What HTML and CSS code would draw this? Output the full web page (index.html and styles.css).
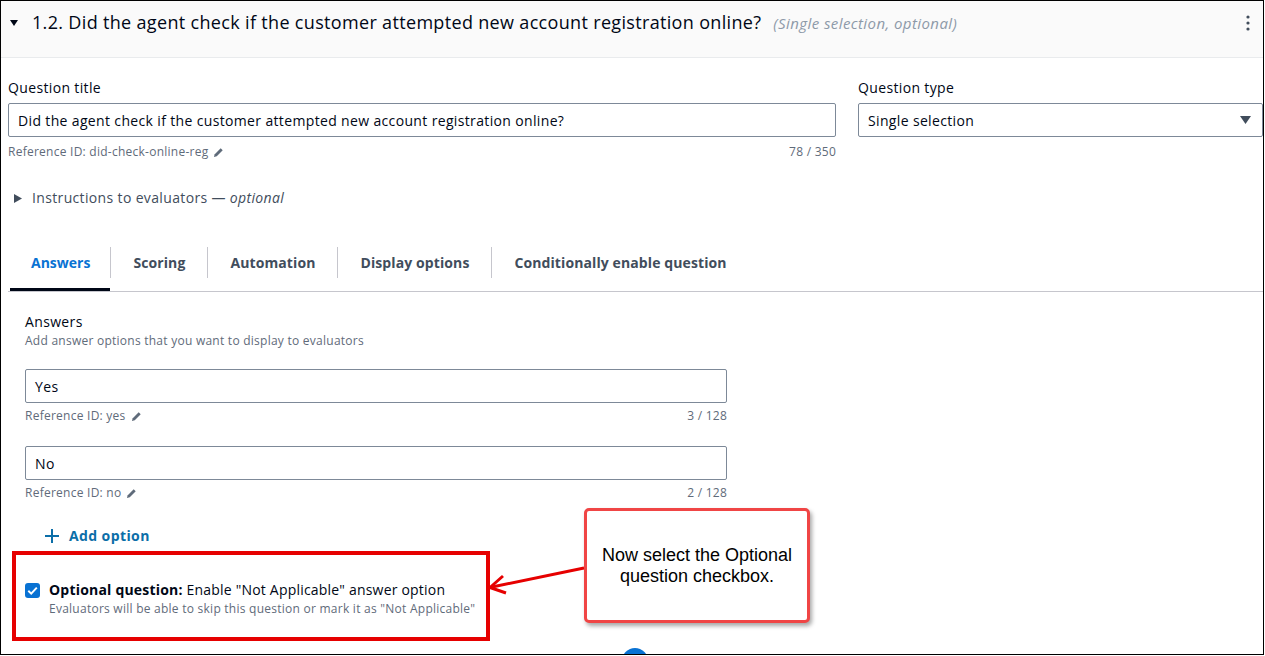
FILE: index.html
```html
<!DOCTYPE html>
<html lang="en">
<head>
<meta charset="utf-8">
<title>Question editor</title>
<link rel="stylesheet" href="styles.css">
</head>
<body>
<div class="frame">
  <div class="q-header">
    <svg class="hdr-caret" width="8" height="6" viewBox="0 0 8 6"><path d="M0 0h8L4 6z"/></svg>
    <h2 class="q-title">1.2. Did the agent check if the customer attempted new account registration online? <span class="q-meta">(Single selection, optional)</span></h2>
    <svg class="kebab" width="4" height="16" viewBox="0 0 4 16"><circle cx="2" cy="2" r="1.6"/><circle cx="2" cy="8" r="1.6"/><circle cx="2" cy="14" r="1.6"/></svg>
  </div>

  <div class="q-body">
    <div class="field-row">
      <div class="field">
        <div class="field-label">Question title</div>
        <div class="input">Did the agent check if the customer attempted new account registration online?</div>
        <div class="field-foot">
          <span class="ref">Reference ID: did-check-online-reg <svg class="pencil" width="11" height="11" viewBox="0 0 12 12"><path d="M1 11l.9-3.1L8.4 1.4l2.2 2.2L4.1 10.1z"/></svg></span>
          <span>78 / 350</span>
        </div>
      </div>
      <div class="field">
        <div class="field-label">Question type</div>
        <div class="input select">
          <span>Single selection</span>
          <svg width="11" height="8" viewBox="0 0 11 8"><path d="M0 0h11L5.5 8z"/></svg>
        </div>
      </div>
    </div>

    <div class="expander">
      <svg width="8" height="9" viewBox="0 0 8 9"><path d="M0 0l8 4.5L0 9z"/></svg>
      <span>Instructions to evaluators — <i>optional</i></span>
    </div>

    <div class="tabs">
      <div class="tab active">Answers</div>
      <span class="tab-sep"></span>
      <div class="tab">Scoring</div>
      <span class="tab-sep"></span>
      <div class="tab">Automation</div>
      <span class="tab-sep"></span>
      <div class="tab">Display options</div>
      <span class="tab-sep"></span>
      <div class="tab">Conditionally enable question</div>
    </div>

    <div class="answers">
      <div class="field-label">Answers</div>
      <div class="field-desc">Add answer options that you want to display to evaluators</div>

      <div class="answer">
        <div class="input">Yes</div>
        <div class="field-foot">
          <span class="ref">Reference ID: yes <svg class="pencil" width="11" height="11" viewBox="0 0 12 12"><path d="M1 11l.9-3.1L8.4 1.4l2.2 2.2L4.1 10.1z"/></svg></span>
          <span>3 / 128</span>
        </div>
      </div>
      <div class="answer">
        <div class="input">No</div>
        <div class="field-foot">
          <span class="ref">Reference ID: no <svg class="pencil" width="11" height="11" viewBox="0 0 12 12"><path d="M1 11l.9-3.1L8.4 1.4l2.2 2.2L4.1 10.1z"/></svg></span>
          <span>2 / 128</span>
        </div>
      </div>

      <div class="add-option">
        <svg width="14" height="14" viewBox="0 0 14 14"><path d="M7 0v14M0 7h14" stroke="currentColor" stroke-width="2"/></svg>
        <span>Add option</span>
      </div>

      <div class="optional">
        <span class="cb"><svg width="15" height="15" viewBox="0 0 15 15"><path d="M3.3 7.8l2.9 2.8L11.8 4.6" stroke="#fff" stroke-width="2" fill="none"/></svg></span>
        <div class="optional-text">
          <div><b>Optional question:</b> Enable "Not Applicable" answer option</div>
          <div class="optional-desc">Evaluators will be able to skip this question or mark it as "Not Applicable"</div>
        </div>
      </div>
    </div>
  </div>

  <div class="peek-dot"></div>

  <div class="hl-box"></div>
  <svg class="arrow" width="106" height="40" viewBox="485 560 106 40">
    <path d="M584 568L492 587" stroke="#e60000" stroke-width="3" fill="none"/>
    <path d="M503 576L490 587.5L506 593" stroke="#e60000" stroke-width="3" fill="none" stroke-linejoin="round"/>
  </svg>
  <div class="callout">Now select the Optional question checkbox.</div>
</div>
</body>
</html>
```

FILE: styles.css
```css
* { box-sizing: border-box; }

body {
  margin: 0;
  background: #fff;
  font-family: "Open Sans", "Noto Sans", sans-serif;
  color: #000716;
  letter-spacing: 0.35px;
}

.frame {
  position: relative;
  width: 1264px;
  height: 655px;
  border: 1px solid #000;
  overflow: hidden;
  background: #fff;
}

/* header */
.q-header {
  height: 57px;
  background: #fafafa;
  border-bottom: 1px solid #e9ebed;
  display: flex;
  align-items: flex-start;
  padding: 9px 13px 0 9px;
}
.hdr-caret { fill: #000716; margin-top: 10px; flex: none; }
.q-title {
  margin: 0 0 0 14px;
  font-size: 18px;
  line-height: 24px;
  font-weight: 400;
  letter-spacing: 0.33px;
  flex: 1;
  white-space: nowrap;
}
.q-meta {
  font-size: 15px;
  font-style: italic;
  color: #8d99a8;
  letter-spacing: 0.42px;
  margin-left: 7px;
}
.kebab { fill: #414d5c; margin-top: 5px; flex: none; }

/* body */
.q-body { padding: 19px 0 0 7px; }

.field-row {
  display: grid;
  grid-template-columns: 828px 1fr;
  column-gap: 22px;
}
.field-label {
  font-size: 14px;
  line-height: 22px;
  margin-bottom: 4px;
}
.input {
  height: 34px;
  border: 1px solid #7d8998;
  border-radius: 2px;
  padding: 0 9px;
  font-size: 14px;
  display: flex;
  align-items: center;
  background: #fff;
}
.select { justify-content: space-between; padding-right: 11px; }
.select svg { fill: #414d5c; }

.field-foot {
  margin-top: 7px;
  display: flex;
  justify-content: space-between;
  font-size: 12px;
  line-height: 16px;
  letter-spacing: 0.25px;
  color: #5f6b7a;
}
.ref { display: inline-flex; align-items: center; gap: 5px; }
.pencil { fill: #5f6b7a; }

.expander {
  margin-top: 27px;
  display: flex;
  align-items: center;
  gap: 10px;
  padding-left: 6px;
  font-size: 14px;
  line-height: 22px;
  color: #414d5c;
}
.expander svg { fill: #414d5c; }

/* tabs */
.tabs {
  margin-top: 24px;
  display: flex;
  align-items: center;
  border-bottom: 1px solid #c6c6cd;
  padding-left: 2px;
}
.tab {
  height: 58px;
  display: flex;
  align-items: center;
  padding: 0 22px;
  font-size: 14px;
  font-weight: 700;
  letter-spacing: 0.1px;
  color: #414d5c;
}
.tab.active {
  color: #0972d3;
  padding-left: 21px;
  padding-right: 20px;
  letter-spacing: 0;
  box-shadow: inset 0 -3px 0 #000716;
}
.tab-sep {
  width: 1px;
  height: 31px;
  background: #c6c6cd;
}

/* answers */
.answers { padding: 19px 0 0 17px; }
.answers .field-label { margin-bottom: 0; }
.field-desc {
  font-size: 12px;
  line-height: 16px;
  letter-spacing: 0.25px;
  color: #5f6b7a;
}
.answer { width: 702px; margin-top: 20px; }
.answer + .answer { margin-top: 22px; }
.answer .field-foot { margin-top: 5px; }

.add-option {
  margin-top: 24px;
  padding-left: 20px;
  display: flex;
  align-items: center;
  gap: 10px;
  font-size: 14px;
  line-height: 22px;
  font-weight: 700;
  letter-spacing: 0.4px;
  color: #0b6ea8;
}

.optional {
  margin-top: 32px;
  display: flex;
  gap: 9px;
  align-items: flex-start;
}
.cb {
  width: 15px;
  height: 15px;
  margin-top: 4px;
  border-radius: 3px;
  background: #0972d3;
  display: flex;
  flex: none;
}
.optional-text { font-size: 14px; line-height: 22px; letter-spacing: 0.2px; }
.optional-desc { font-size: 12px; line-height: 16px; color: #5f6b7a; letter-spacing: 0.25px; }

/* partially visible control below */
.peek-dot {
  position: absolute;
  left: 621px;
  top: 647px;
  width: 26px;
  height: 26px;
  border-radius: 50%;
  background: #0972d3;
}

/* annotation overlay */
.hl-box {
  position: absolute;
  left: 11px;
  top: 550px;
  width: 478px;
  height: 90px;
  border: 4px solid #e60000;
}
.arrow {
  position: absolute;
  left: 484px;
  top: 559px;
}
.callout {
  position: absolute;
  left: 583px;
  top: 507px;
  width: 226px;
  height: 115px;
  border: 3px solid #f04545;
  border-radius: 5px;
  background: #fff;
  box-shadow: 2px 3px 4px rgba(0, 0, 0, 0.35);
  display: flex;
  align-items: center;
  justify-content: center;
  text-align: center;
  padding: 0 14px;
  font-family: "Liberation Sans", Arial, sans-serif;
  font-size: 18px;
  line-height: 21px;
  letter-spacing: 0;
  color: #000;
}
```
